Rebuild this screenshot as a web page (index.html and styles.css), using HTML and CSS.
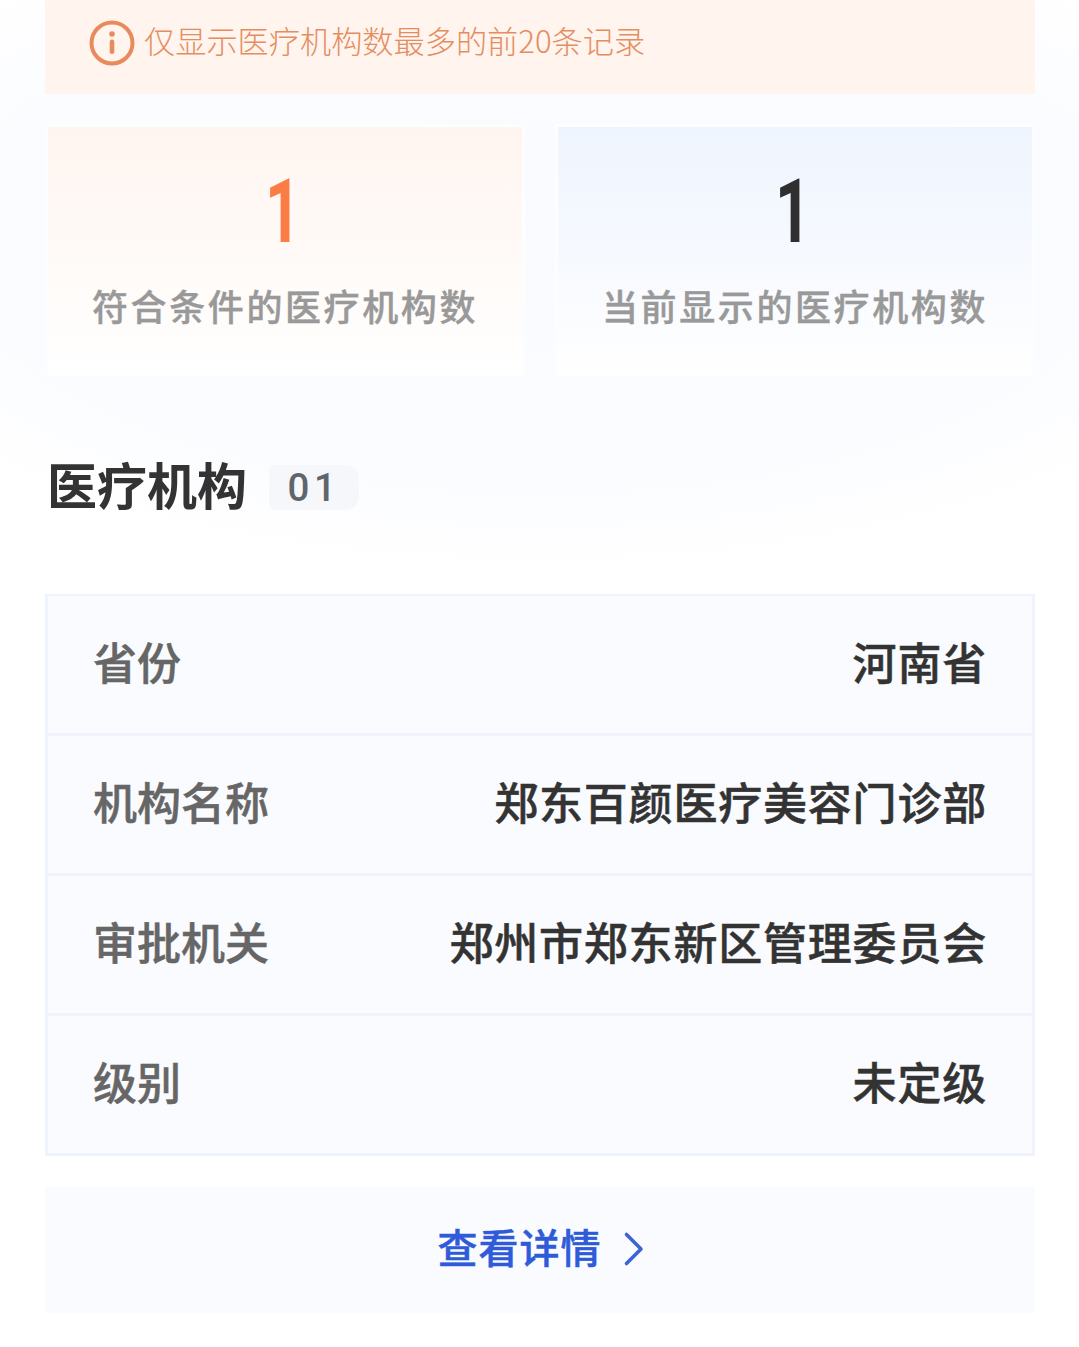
FILE: index.html
```html
<!DOCTYPE html>
<html lang="zh-CN">
  <head>
    <meta charset="utf-8" />
    <title>医疗机构</title>
    <meta name="viewport" content="width=device-width, initial-scale=1.0" />
    <link rel="stylesheet" href="styles.css">
  </head>
  <body>
    <div class="notice">
      <svg class="noticeIcon" width="46" height="46" viewBox="0 0 46 46">
        <circle cx="23" cy="23" r="20.5" fill="none" stroke="#e98a5c" stroke-width="4" />
        <circle cx="23" cy="14" r="2.8" fill="#e98a5c" />
        <rect x="20.7" y="19.5" width="4.6" height="14.5" rx="2.2" fill="#e98a5c" />
      </svg>
      <span class="noticeText">仅显示医疗机构数最多的前20条记录</span>
    </div>
    <div class="stats">
      <div class="statCard statOrange">
        <div class="statNumber numberOrange">1</div>
        <div class="statLabel">符合条件的医疗机构数</div>
      </div>
      <div class="statCard statBlue">
        <div class="statNumber">1</div>
        <div class="statLabel">当前显示的医疗机构数</div>
      </div>
    </div>
    <div class="sectionTitle">
      <h2 class="heading">医疗机构</h2>
      <span class="countBadge">01</span>
    </div>
    <div class="infoTable">
      <div class="infoRow">
        <span class="infoLabel">省份</span>
        <span class="infoValue">河南省</span>
      </div>
      <div class="infoRow">
        <span class="infoLabel">机构名称</span>
        <span class="infoValue">郑东百颜医疗美容门诊部</span>
      </div>
      <div class="infoRow">
        <span class="infoLabel">审批机关</span>
        <span class="infoValue">郑州市郑东新区管理委员会</span>
      </div>
      <div class="infoRow">
        <span class="infoLabel">级别</span>
        <span class="infoValue">未定级</span>
      </div>
    </div>
    <div class="detailButton">
      <span class="detailText">查看详情</span>
      <svg class="detailArrow" width="22" height="36" viewBox="0 0 22 36">
        <path d="M3.5 3.5 L18 18 L3.5 32.5" fill="none" stroke="#3e63d6" stroke-width="3.6" stroke-linecap="round" stroke-linejoin="round" />
      </svg>
    </div>
  </body>
</html>
```

FILE: styles.css
```css
html {
  height: 100%;
}
body {
  margin: 0;
  padding: 0 44px 0 45px;
  overflow: hidden;
  font-family: "Noto Sans CJK SC", "Noto Sans", sans-serif;
  background-color: #ffffff;
  background-image: radial-gradient(ellipse 780px 340px at 50% 235px, #f9fbff 0%, #fbfcff 72%, #ffffff 100%);
  background-repeat: no-repeat;
}
.notice {
  display: flex;
  align-items: center;
  height: 94px;
  padding-left: 44px;
  background: #fff4ee;
}
.noticeIcon {
  flex: none;
  margin-right: 9px;
  margin-bottom: 8px;
}
.noticeText {
  padding-bottom: 16px;
  font-size: 31.2px;
  font-weight: 300;
  color: #e58d60;
}
.stats {
  display: flex;
  gap: 30px;
  margin-top: 30px;
}
.statCard {
  flex: 1;
  height: 252px;
  box-sizing: border-box;
  border: 3px solid #fcfdff;
  border-bottom: none;
  text-align: center;
}
.statOrange {
  background: linear-gradient(180deg, #fff5f0 0%, #fffaf7 50%, #ffffff 100%);
}
.statBlue {
  background: linear-gradient(180deg, #eff5fe 0%, #f6f9ff 50%, #ffffff 100%);
}
.statNumber {
  height: 100px;
  margin-top: 35px;
  padding-right: 6px;
  font-family: "Roboto", sans-serif;
  font-size: 89px;
  font-weight: 700;
  line-height: 100px;
  color: #2f2f2f;
  transform: scaleX(0.7);
}
.numberOrange {
  color: #fb7c45;
}
.statLabel {
  margin-top: 18px;
  font-size: 36px;
  font-weight: 500;
  line-height: 50px;
  letter-spacing: 2.6px;
  color: #999999;
  -webkit-text-stroke: 0.4px #999999;
}
.sectionTitle {
  display: flex;
  align-items: center;
  margin-top: 81px;
  padding-left: 2px;
}
.heading {
  margin: 0 22px 0 0;
  padding-bottom: 8px;
  font-size: 50px;
  font-weight: 700;
  line-height: 52px;
  color: #333333;
}
.countBadge {
  width: 90px;
  height: 45px;
  font-family: "Roboto", sans-serif;
  font-size: 38.5px;
  font-weight: 500;
  line-height: 45px;
  letter-spacing: 4.5px;
  text-align: center;
  color: #60646b;
  background: #f5f7fb;
  border-radius: 6px 14px 14px 6px;
}
.infoTable {
  margin-top: 77px;
  border: 3px solid #eff3fb;
  border-top-width: 2px;
  background: #fafbfe;
}
.infoRow {
  display: flex;
  justify-content: space-between;
  align-items: center;
  height: 137px;
  padding: 0 45px;
  border-bottom: 3px solid #f0f3fb;
}
.infoRow:last-child {
  border-bottom: none;
}
.infoLabel {
  padding-bottom: 8px;
  font-size: 44px;
  font-weight: 500;
  color: #666666;
  -webkit-text-stroke: 0.5px #666666;
}
.infoValue {
  padding-bottom: 8px;
  font-size: 44px;
  font-weight: 500;
  letter-spacing: 0.8px;
  color: #333333;
  -webkit-text-stroke: 0.5px #333333;
}
.detailButton {
  display: flex;
  justify-content: center;
  align-items: center;
  height: 126px;
  margin-top: 31px;
  padding-left: 2px;
  background: #f9fbff;
}
.detailText {
  padding-bottom: 8px;
  font-size: 40px;
  font-weight: 500;
  letter-spacing: 1px;
  color: #2f5bd8;
  -webkit-text-stroke: 0.5px #2f5bd8;
}
.detailArrow {
  margin-left: 21px;
  margin-bottom: 3px;
}
```
